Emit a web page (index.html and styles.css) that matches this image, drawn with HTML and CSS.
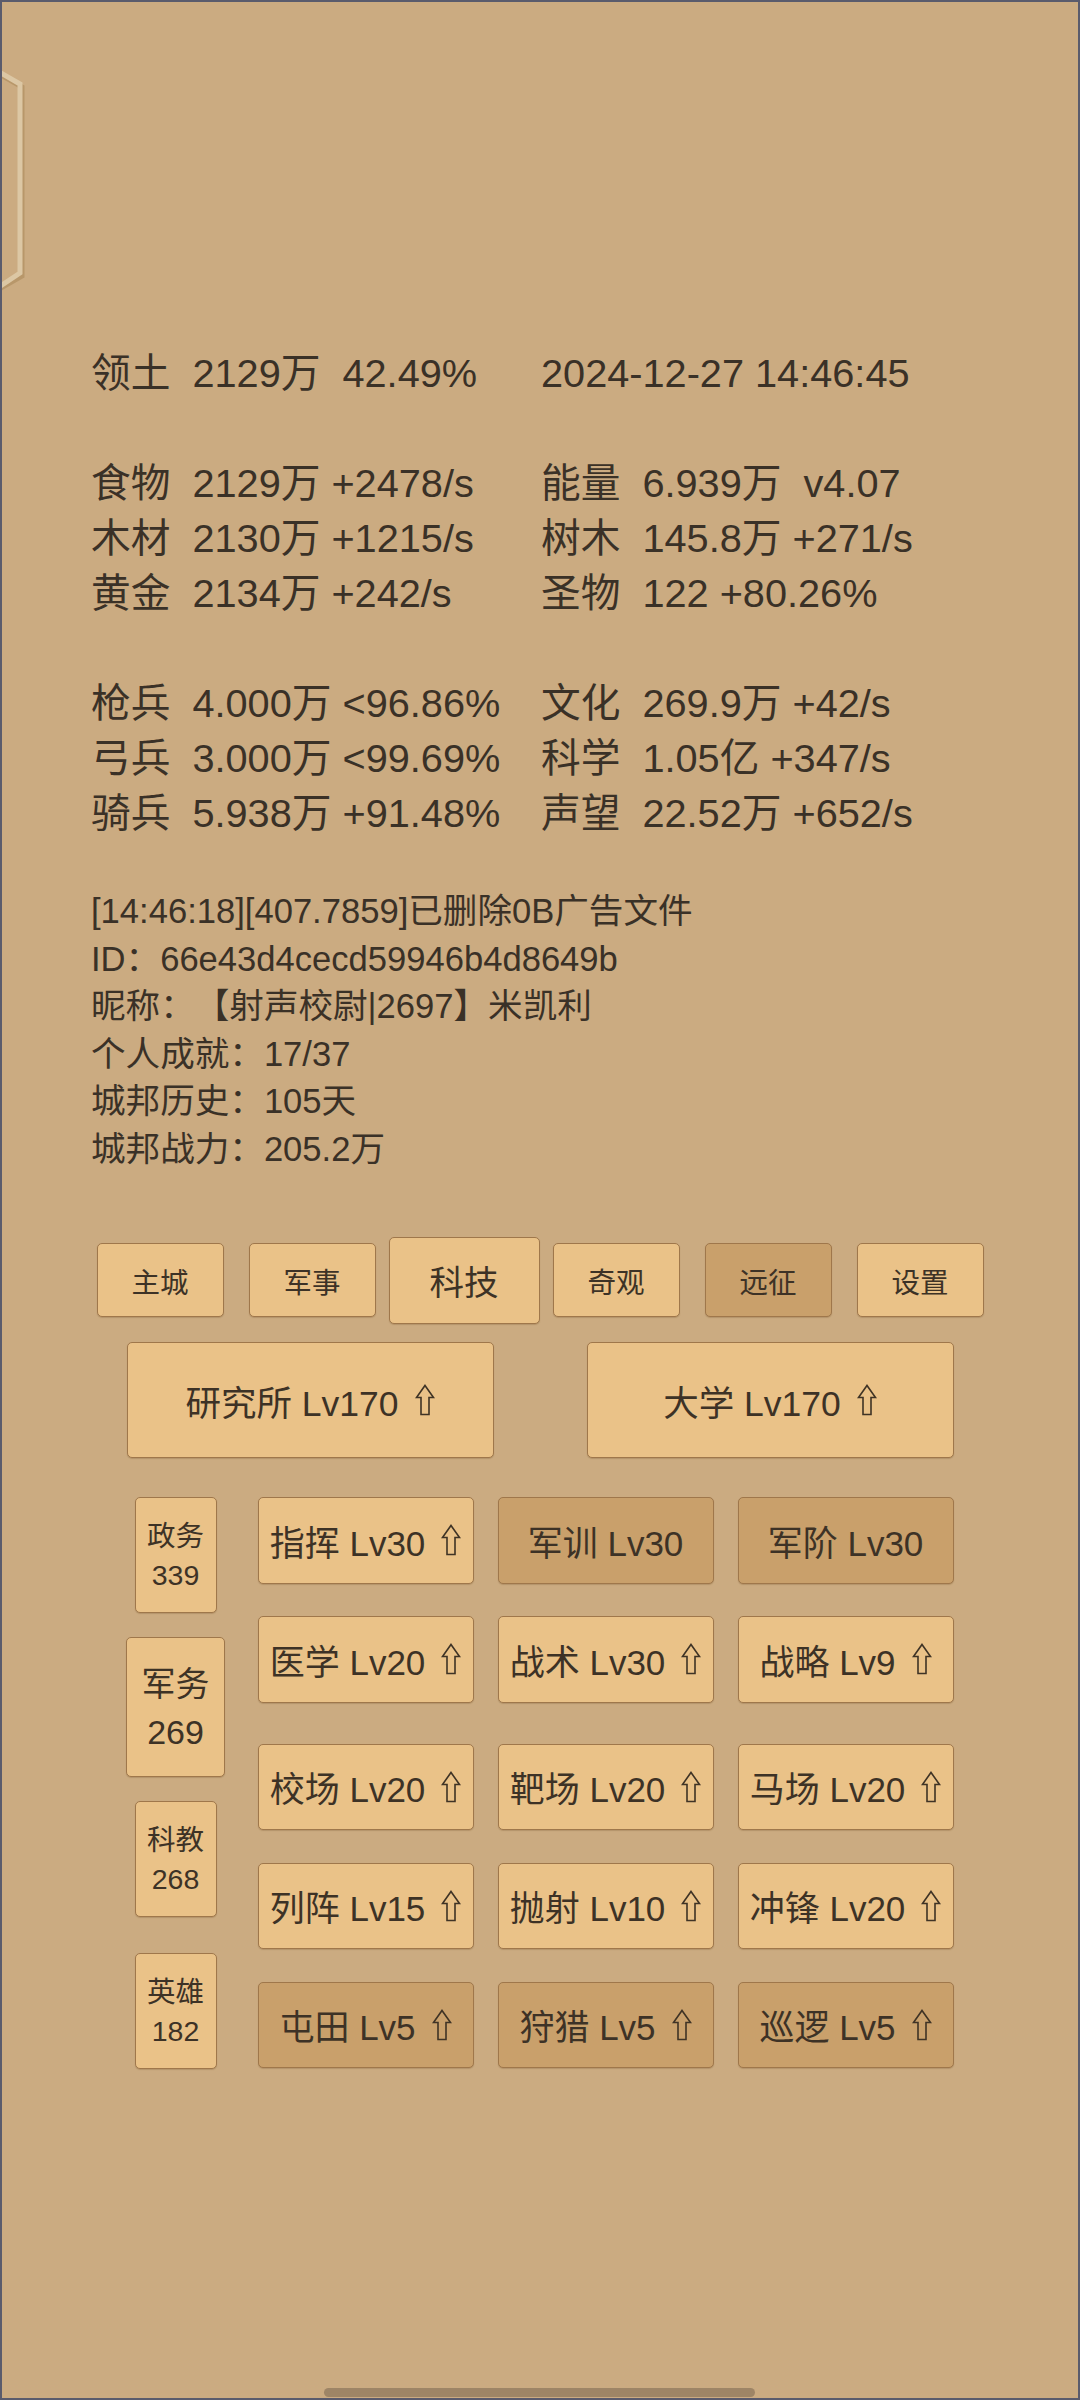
FILE: index.html
```html
<!DOCTYPE html>
<html lang="zh">
<head>
<meta charset="utf-8">
<title>城邦</title>
<link rel="stylesheet" href="styles.css">
</head>
<body>
<div class="screen">
  <svg class="edge-tab" width="30" height="250" viewBox="0 0 30 250">
    <polyline points="-3,14 20,27 20,216 -3,229" fill="none" stroke="#b8976a" stroke-width="5" stroke-linejoin="miter"/>
    <polyline points="-3,12 18,24 18,213 -3,227" fill="none" stroke="#dcc7a4" stroke-width="5" stroke-linejoin="miter"/>
  </svg>

  <div class="stats">
    <div class="cell">领土  2129万  42.49%</div><div class="cell">2024-12-27 14:46:45</div>
    <div class="blank"></div>
    <div class="cell">食物  2129万 +2478/s</div><div class="cell">能量  6.939万  v4.07</div>
    <div class="cell">木材  2130万 +1215/s</div><div class="cell">树木  145.8万 +271/s</div>
    <div class="cell">黄金  2134万 +242/s</div><div class="cell">圣物  122 +80.26%</div>
    <div class="blank"></div>
    <div class="cell">枪兵  4.000万 &lt;96.86%</div><div class="cell">文化  269.9万 +42/s</div>
    <div class="cell">弓兵  3.000万 &lt;99.69%</div><div class="cell">科学  1.05亿 +347/s</div>
    <div class="cell">骑兵  5.938万 +91.48%</div><div class="cell">声望  22.52万 +652/s</div>
  </div>

  <div class="info">
    <div class="line">[14:46:18][407.7859]已删除0B广告文件</div>
    <div class="line">ID：66e43d4cecd59946b4d8649b</div>
    <div class="line">昵称：【射声校尉|2697】米凯利</div>
    <div class="line">个人成就：17/37</div>
    <div class="line">城邦历史：105天</div>
    <div class="line">城邦战力：205.2万</div>
  </div>

  <div class="tabs">
    <div class="slot"><div class="btn tab">主城</div></div>
    <div class="slot"><div class="btn tab">军事</div></div>
    <div class="slot"><div class="btn tab sel">科技</div></div>
    <div class="slot"><div class="btn tab">奇观</div></div>
    <div class="slot"><div class="btn tab dark">远征</div></div>
    <div class="slot"><div class="btn tab">设置</div></div>
  </div>

  <div class="majors">
    <div class="btn major">研究所 Lv170<svg class="up" viewBox="0 0 20 32" width="20" height="32"><path d="M10 1.5 L18.5 13.5 L14 13.5 L14 30.5 L6 30.5 L6 13.5 L1.5 13.5 Z" fill="none" stroke="#3f3325" stroke-width="1.6"/></svg></div>
    <div class="btn major">大学 Lv170<svg class="up" viewBox="0 0 20 32" width="20" height="32"><path d="M10 1.5 L18.5 13.5 L14 13.5 L14 30.5 L6 30.5 L6 13.5 L1.5 13.5 Z" fill="none" stroke="#3f3325" stroke-width="1.6"/></svg></div>
  </div>

  <div class="board">
    <div class="cats">
      <div class="cslot"><div class="btn cat">政务<br>339</div></div>
      <div class="cslot"><div class="btn cat sel">军务<br>269</div></div>
      <div class="cslot"><div class="btn cat">科教<br>268</div></div>
      <div class="cslot"><div class="btn cat">英雄<br>182</div></div>
    </div>
    <div class="techs">
      <div class="group">
        <div class="trow">
          <div class="btn tech">指挥 Lv30<svg class="up" viewBox="0 0 20 32" width="20" height="32"><path d="M10 1.5 L18.5 13.5 L14 13.5 L14 30.5 L6 30.5 L6 13.5 L1.5 13.5 Z" fill="none" stroke="#3f3325" stroke-width="1.6"/></svg></div>
          <div class="btn tech dark">军训 Lv30</div>
          <div class="btn tech dark">军阶 Lv30</div>
        </div>
        <div class="trow">
          <div class="btn tech">医学 Lv20<svg class="up" viewBox="0 0 20 32" width="20" height="32"><path d="M10 1.5 L18.5 13.5 L14 13.5 L14 30.5 L6 30.5 L6 13.5 L1.5 13.5 Z" fill="none" stroke="#3f3325" stroke-width="1.6"/></svg></div>
          <div class="btn tech">战术 Lv30<svg class="up" viewBox="0 0 20 32" width="20" height="32"><path d="M10 1.5 L18.5 13.5 L14 13.5 L14 30.5 L6 30.5 L6 13.5 L1.5 13.5 Z" fill="none" stroke="#3f3325" stroke-width="1.6"/></svg></div>
          <div class="btn tech">战略 Lv9<svg class="up" viewBox="0 0 20 32" width="20" height="32"><path d="M10 1.5 L18.5 13.5 L14 13.5 L14 30.5 L6 30.5 L6 13.5 L1.5 13.5 Z" fill="none" stroke="#3f3325" stroke-width="1.6"/></svg></div>
        </div>
      </div>
      <div class="group second">
        <div class="trow">
          <div class="btn tech">校场 Lv20<svg class="up" viewBox="0 0 20 32" width="20" height="32"><path d="M10 1.5 L18.5 13.5 L14 13.5 L14 30.5 L6 30.5 L6 13.5 L1.5 13.5 Z" fill="none" stroke="#3f3325" stroke-width="1.6"/></svg></div>
          <div class="btn tech">靶场 Lv20<svg class="up" viewBox="0 0 20 32" width="20" height="32"><path d="M10 1.5 L18.5 13.5 L14 13.5 L14 30.5 L6 30.5 L6 13.5 L1.5 13.5 Z" fill="none" stroke="#3f3325" stroke-width="1.6"/></svg></div>
          <div class="btn tech">马场 Lv20<svg class="up" viewBox="0 0 20 32" width="20" height="32"><path d="M10 1.5 L18.5 13.5 L14 13.5 L14 30.5 L6 30.5 L6 13.5 L1.5 13.5 Z" fill="none" stroke="#3f3325" stroke-width="1.6"/></svg></div>
        </div>
        <div class="trow">
          <div class="btn tech">列阵 Lv15<svg class="up" viewBox="0 0 20 32" width="20" height="32"><path d="M10 1.5 L18.5 13.5 L14 13.5 L14 30.5 L6 30.5 L6 13.5 L1.5 13.5 Z" fill="none" stroke="#3f3325" stroke-width="1.6"/></svg></div>
          <div class="btn tech">抛射 Lv10<svg class="up" viewBox="0 0 20 32" width="20" height="32"><path d="M10 1.5 L18.5 13.5 L14 13.5 L14 30.5 L6 30.5 L6 13.5 L1.5 13.5 Z" fill="none" stroke="#3f3325" stroke-width="1.6"/></svg></div>
          <div class="btn tech">冲锋 Lv20<svg class="up" viewBox="0 0 20 32" width="20" height="32"><path d="M10 1.5 L18.5 13.5 L14 13.5 L14 30.5 L6 30.5 L6 13.5 L1.5 13.5 Z" fill="none" stroke="#3f3325" stroke-width="1.6"/></svg></div>
        </div>
        <div class="trow">
          <div class="btn tech dark">屯田 Lv5<svg class="up" viewBox="0 0 20 32" width="20" height="32"><path d="M10 1.5 L18.5 13.5 L14 13.5 L14 30.5 L6 30.5 L6 13.5 L1.5 13.5 Z" fill="none" stroke="#3f3325" stroke-width="1.6"/></svg></div>
          <div class="btn tech dark">狩猎 Lv5<svg class="up" viewBox="0 0 20 32" width="20" height="32"><path d="M10 1.5 L18.5 13.5 L14 13.5 L14 30.5 L6 30.5 L6 13.5 L1.5 13.5 Z" fill="none" stroke="#3f3325" stroke-width="1.6"/></svg></div>
          <div class="btn tech dark">巡逻 Lv5<svg class="up" viewBox="0 0 20 32" width="20" height="32"><path d="M10 1.5 L18.5 13.5 L14 13.5 L14 30.5 L6 30.5 L6 13.5 L1.5 13.5 Z" fill="none" stroke="#3f3325" stroke-width="1.6"/></svg></div>
        </div>
      </div>
    </div>
  </div>

  <div class="handle"></div>
</div>
</body>
</html>
```

FILE: styles.css
```css
html, body {
  margin: 0;
  padding: 0;
  background: #cbab81;
}

body {
  font-family: "Liberation Sans", "Noto Sans CJK SC", sans-serif;
  color: #3a3127;
  text-spacing-trim: space-all;
}

.screen {
  position: relative;
  box-sizing: border-box;
  width: 1080px;
  height: 2400px;
  overflow: hidden;
  background: #cbab81;
  border: 2px solid #5a5b6c;
  padding-top: 343.5px;
}

.edge-tab {
  position: absolute;
  left: 0;
  top: 58px;
}

.stats {
  display: grid;
  grid-template-columns: 450px auto;
  margin-left: 89px;
  font-size: 39.7px;
  line-height: 55px;
}

.stats .cell {
  white-space: pre;
}

.stats .blank {
  grid-column: 1 / span 2;
  height: 55px;
}

.info {
  margin-top: 47.5px;
  margin-left: 89px;
  font-size: 34.6px;
  line-height: 47.5px;
}

.info .line {
  white-space: pre;
  text-spacing-trim: space-all;
}

.btn {
  box-sizing: border-box;
  display: flex;
  align-items: center;
  justify-content: center;
  background: #eac288;
  border: 1.5px solid #9f774b;
  border-radius: 5px;
  box-shadow: 0 1px 1px rgba(110, 80, 40, 0.25);
  color: #3d3226;
  white-space: nowrap;
}

.btn.dark {
  background: #c9a06b;
}

.tabs {
  display: flex;
  justify-content: center;
  margin-top: 63.5px;
  height: 87px;
}

.slot {
  width: 152px;
  display: flex;
  align-items: center;
  justify-content: center;
}

.tab {
  width: 127px;
  height: 74px;
  font-size: 28.5px;
}

.tab.sel {
  width: 151px;
  height: 87px;
  font-size: 34.5px;
}

.majors {
  display: flex;
  justify-content: center;
  gap: 93px;
  margin-top: 18.5px;
}

.major {
  width: 367px;
  height: 116px;
  font-size: 35.5px;
}

.up {
  margin-left: 16px;
  flex: none;
}

.board {
  display: flex;
  justify-content: center;
  gap: 32px;
  margin-top: 21px;
  padding-right: 1px;
}

.cats {
  width: 100px;
  display: flex;
  flex-direction: column;
}

.cslot {
  height: 152px;
  display: flex;
  align-items: center;
  justify-content: center;
}

.cat {
  width: 82px;
  height: 116px;
  font-size: 28.5px;
  line-height: 39px;
  text-align: center;
  padding-top: 2px;
}

.cat.sel {
  width: 99px;
  height: 140px;
  font-size: 34px;
  line-height: 48px;
}

.techs {
  width: 696px;
  margin-top: 18px;
  display: flex;
  flex-direction: column;
}

.group {
  display: flex;
  flex-direction: column;
  gap: 32.5px;
}

.group.second {
  margin-top: 41px;
}

.trow {
  display: flex;
  gap: 24px;
}

.tech {
  width: 216px;
  height: 86.5px;
  font-size: 35px;
}

.handle {
  position: absolute;
  left: 322px;
  bottom: 1px;
  width: 431px;
  height: 9px;
  border-radius: 5px;
  background: #9e8566;
}
```
